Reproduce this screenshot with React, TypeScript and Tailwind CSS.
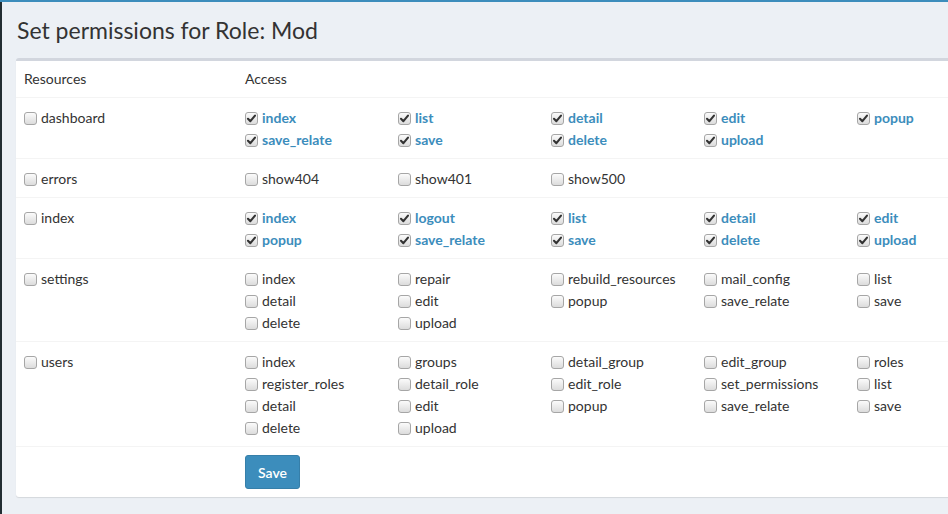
import React from 'react';

type Perm = { name: string; on: boolean };
type Resource = { name: string; perms: Perm[] };

const p = (names: string, on: boolean): Perm[] =>
  names.split(' ').map((name) => ({ name, on }));

const resources: Resource[] = [
  { name: 'dashboard', perms: p('index list detail edit popup save_relate save delete upload', true) },
  { name: 'errors', perms: p('show404 show401 show500', false) },
  { name: 'index', perms: p('index logout list detail edit popup save_relate save delete upload', true) },
  {
    name: 'settings',
    perms: p('index repair rebuild_resources mail_config list detail edit popup save_relate save delete upload', false),
  },
  {
    name: 'users',
    perms: p(
      'index groups detail_group edit_group roles register_roles detail_role edit_role set_permissions list detail edit popup save_relate save delete upload',
      false,
    ),
  },
];

function Box({ checked }: { checked?: boolean }) {
  return (
    <span className="relative mr-[4px] inline-block h-[13px] w-[13px] shrink-0 rounded-[3px] border border-[#a6a6a6] bg-gradient-to-b from-[#fbfbfb] to-[#dcdcdc]">
      {checked && (
        <svg viewBox="0 0 13 13" className="absolute -left-px -top-px h-[13px] w-[13px]">
          <path d="M3 6.8 L5.4 9.2 L10 3.6" fill="none" stroke="#333" strokeWidth="2.1" strokeLinecap="round" strokeLinejoin="round" />
        </svg>
      )}
    </span>
  );
}

function Item({ perm }: { perm: Perm }) {
  return (
    <label className="flex h-[22px] items-center whitespace-nowrap">
      <Box checked={perm.on} />
      <span className={perm.on ? 'font-bold text-[#3c8dbc]' : 'text-[#333]'}>{perm.name}</span>
    </label>
  );
}

export default function App() {
  return (
    <div
      className="relative h-[514px] w-[948px] overflow-hidden border-t-2 border-[#3c8dbc] bg-[#ecf0f5] text-[14px] text-[#333]"
      style={{ fontFamily: '"Lato", "Open Sans", sans-serif' }}
    >
      <div className="absolute bottom-0 left-0 top-0 w-[2px] bg-[#222d32]" />
      <div className="pl-[17px] pt-[13px]">
        <h1 className="text-[23px] leading-[30px] font-normal">Set permissions for Role: Mod</h1>
      </div>
      <div className="ml-[16px] mt-[13px] w-[1010px] rounded-[3px] border-t-[3px] border-[#d2d6de] bg-white shadow-[0_1px_1px_rgba(0,0,0,0.1)]">
        <div className="flex border-b border-[#f4f4f4] leading-[20px]">
          <div className="w-[221px] shrink-0 p-[8px]">Resources</div>
          <div className="p-[8px]">Access</div>
        </div>
        {resources.map((r) => (
          <div key={r.name} className="flex border-b border-[#f4f4f4] leading-[22px]">
            <div className="w-[221px] shrink-0 px-[8px] pb-[7px] pt-[9px]">
              <Item perm={{ name: r.name, on: false }} />
            </div>
            <div className="grid shrink-0 grid-cols-[repeat(5,153px)] px-[8px] pb-[7px] pt-[9px]">
              {r.perms.map((perm, i) => (
                <Item key={i} perm={perm} />
              ))}
            </div>
          </div>
        ))}
        <div className="flex">
          <div className="w-[221px] shrink-0" />
          <div className="p-[8px]">
            <button className="h-[34px] rounded-[3px] border border-[#367fa9] bg-[#3c8dbc] px-[12px] font-semibold text-white">
              Save
            </button>
          </div>
        </div>
      </div>
    </div>
  );
}
